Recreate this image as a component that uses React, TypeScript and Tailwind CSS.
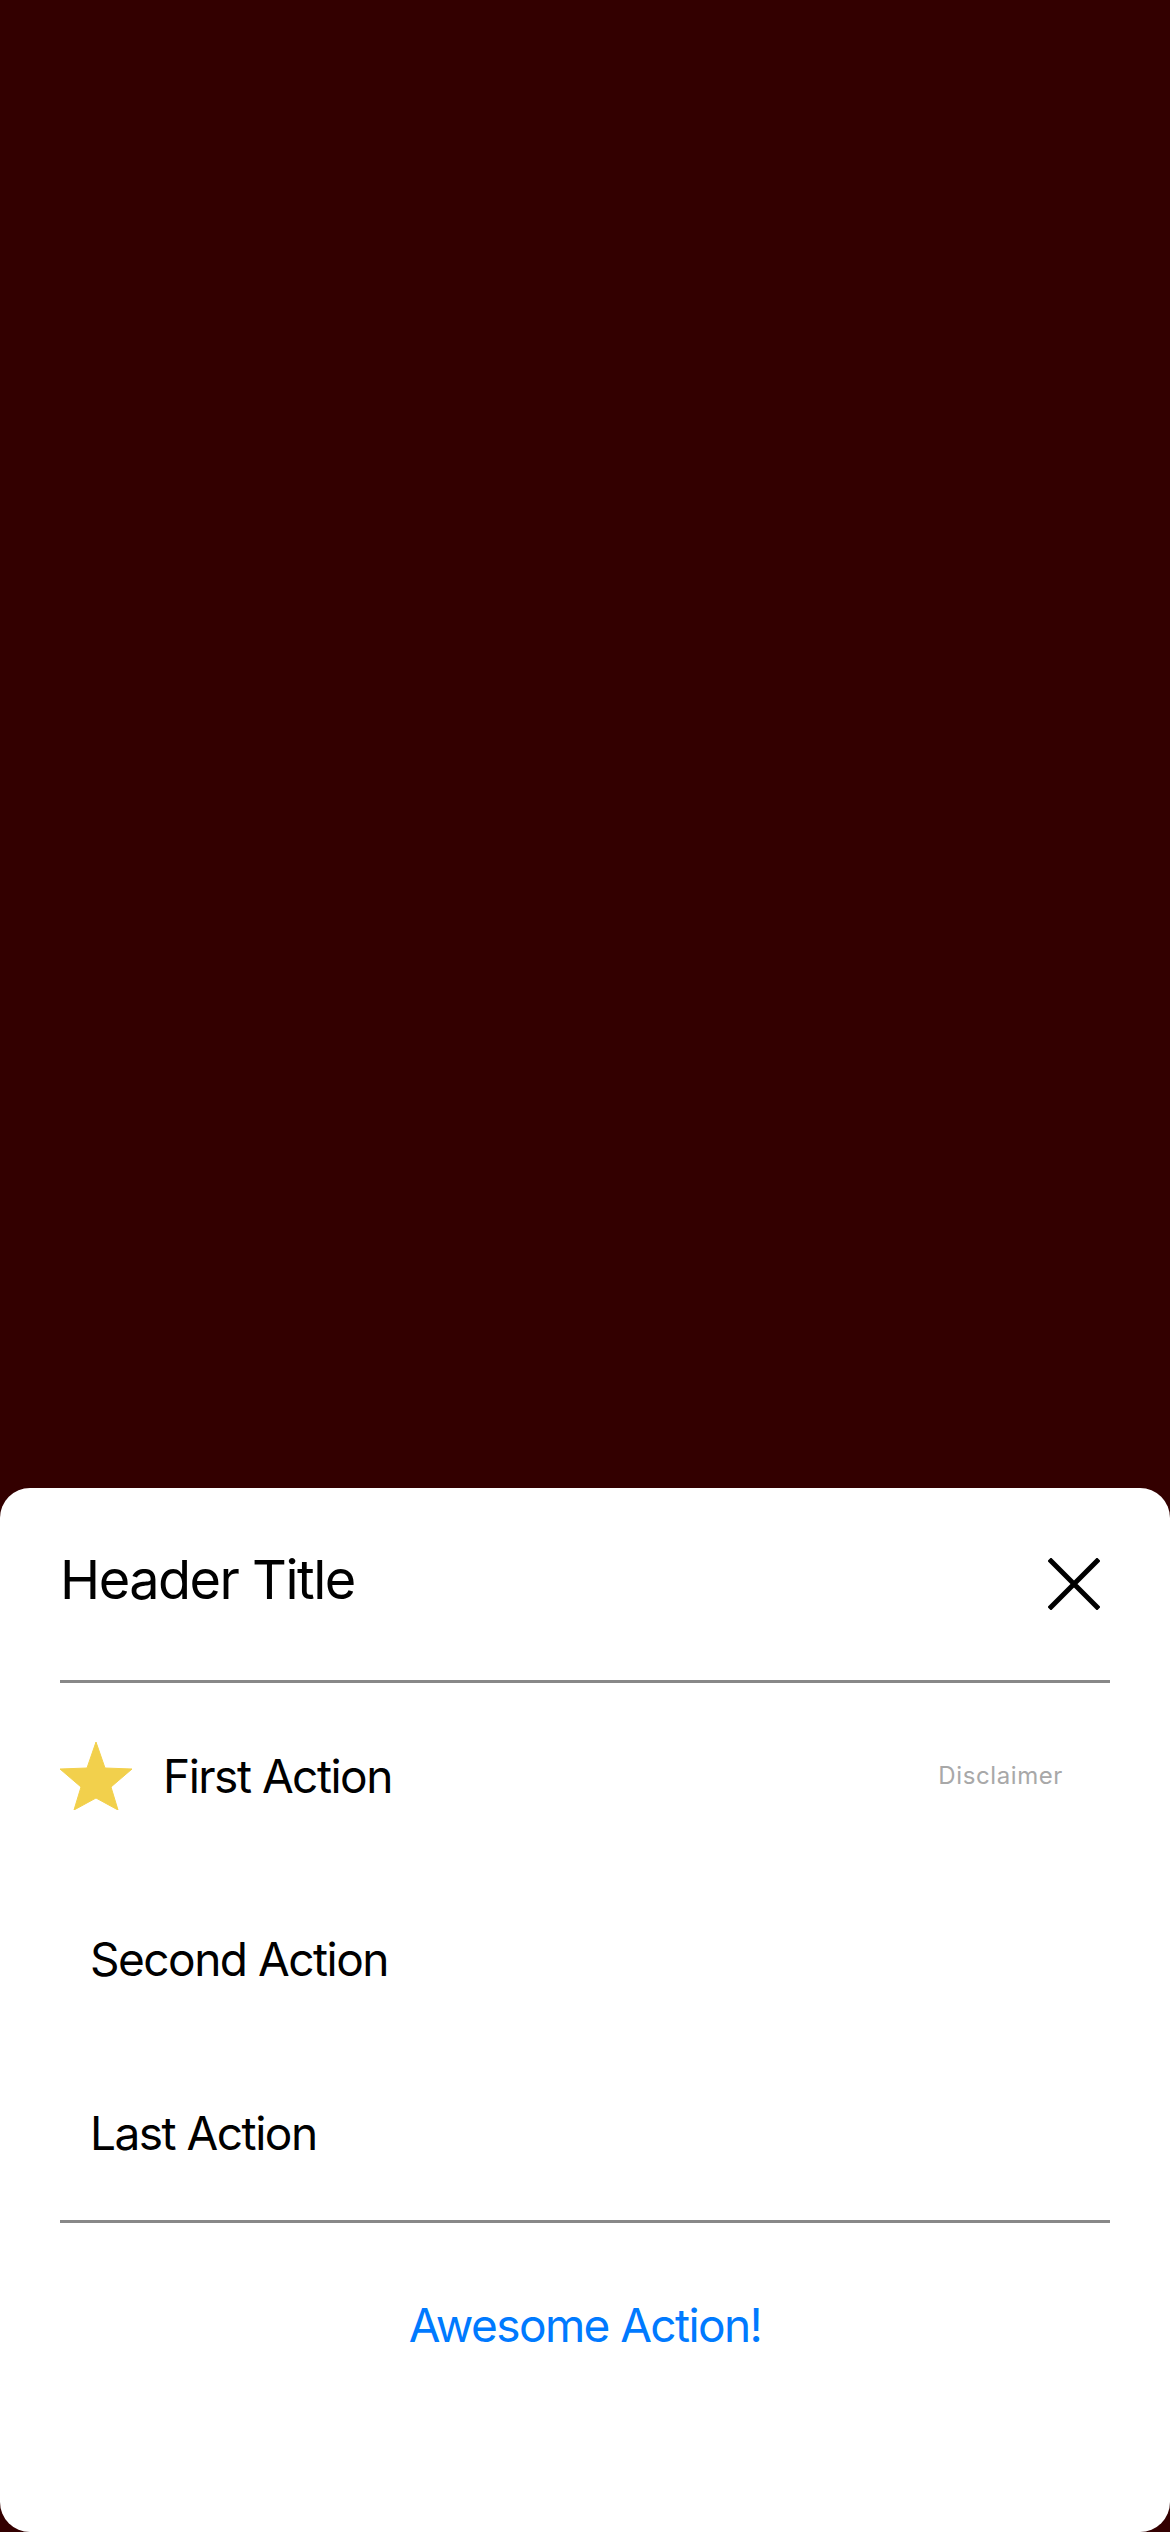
function CloseIcon() {
  return (
    <svg width="52" height="52" viewBox="0 0 52 52" className="mt-[8px]">
      <path d="M3 3 L49 49 M49 3 L3 49" stroke="#000" strokeWidth="5" strokeLinecap="square" />
    </svg>
  );
}

function StarIcon() {
  return (
    <svg width="72" height="68" viewBox="0 0 72 68">
      <path
        d="M36 0 L45 26 L72 27 L51 45 L58 68 L36 56 L14 68 L21 45 L0 27 L27 26 Z"
        fill="#f2d04c"
        stroke="#f2d04c"
        strokeWidth="1"
        strokeLinejoin="round"
      />
    </svg>
  );
}

export default function App() {
  return (
    <div
      className="flex h-[2532px] w-[1170px] flex-col bg-[#330000]"
      style={{ fontFamily: "Inter, 'Liberation Sans', sans-serif" }}
    >
      <div className="flex-1" />
      <div className="flex h-[1044px] flex-col rounded-[30px] bg-white px-[60px]">
        <div className="mt-[40px] flex h-[104px] items-center justify-between">
          <span className="text-[54px] leading-none tracking-[-1.5px] text-black">Header Title</span>
          <div className="mr-[10px]">
            <CloseIcon />
          </div>
        </div>
        <div className="mt-[48px] h-[3px] bg-[#888888]" />

        <div className="flex h-[186px] items-center pr-[47px]">
          <StarIcon />
          <span className="ml-[31px] text-[46px] leading-none tracking-[-1.5px] text-black">First Action</span>
          <span className="ml-auto text-[24px] leading-none tracking-[0.6px] text-[#a8a8a8]">Disclaimer</span>
        </div>
        <div className="flex h-[180px] items-center pl-[30px]">
          <span className="text-[46px] leading-none tracking-[-1.5px] text-black">Second Action</span>
        </div>
        <div className="flex h-[168px] items-center pl-[30px]">
          <span className="text-[46px] leading-none tracking-[-1.5px] text-black">Last Action</span>
        </div>
        <div className="mt-[3px] h-[3px] bg-[#888888]" />

        <div className="flex h-[204px] items-center justify-center">
          <span className="text-[46px] leading-none tracking-[-1.6px] text-[#007aff]">Awesome Action!</span>
        </div>
      </div>
    </div>
  );
}
